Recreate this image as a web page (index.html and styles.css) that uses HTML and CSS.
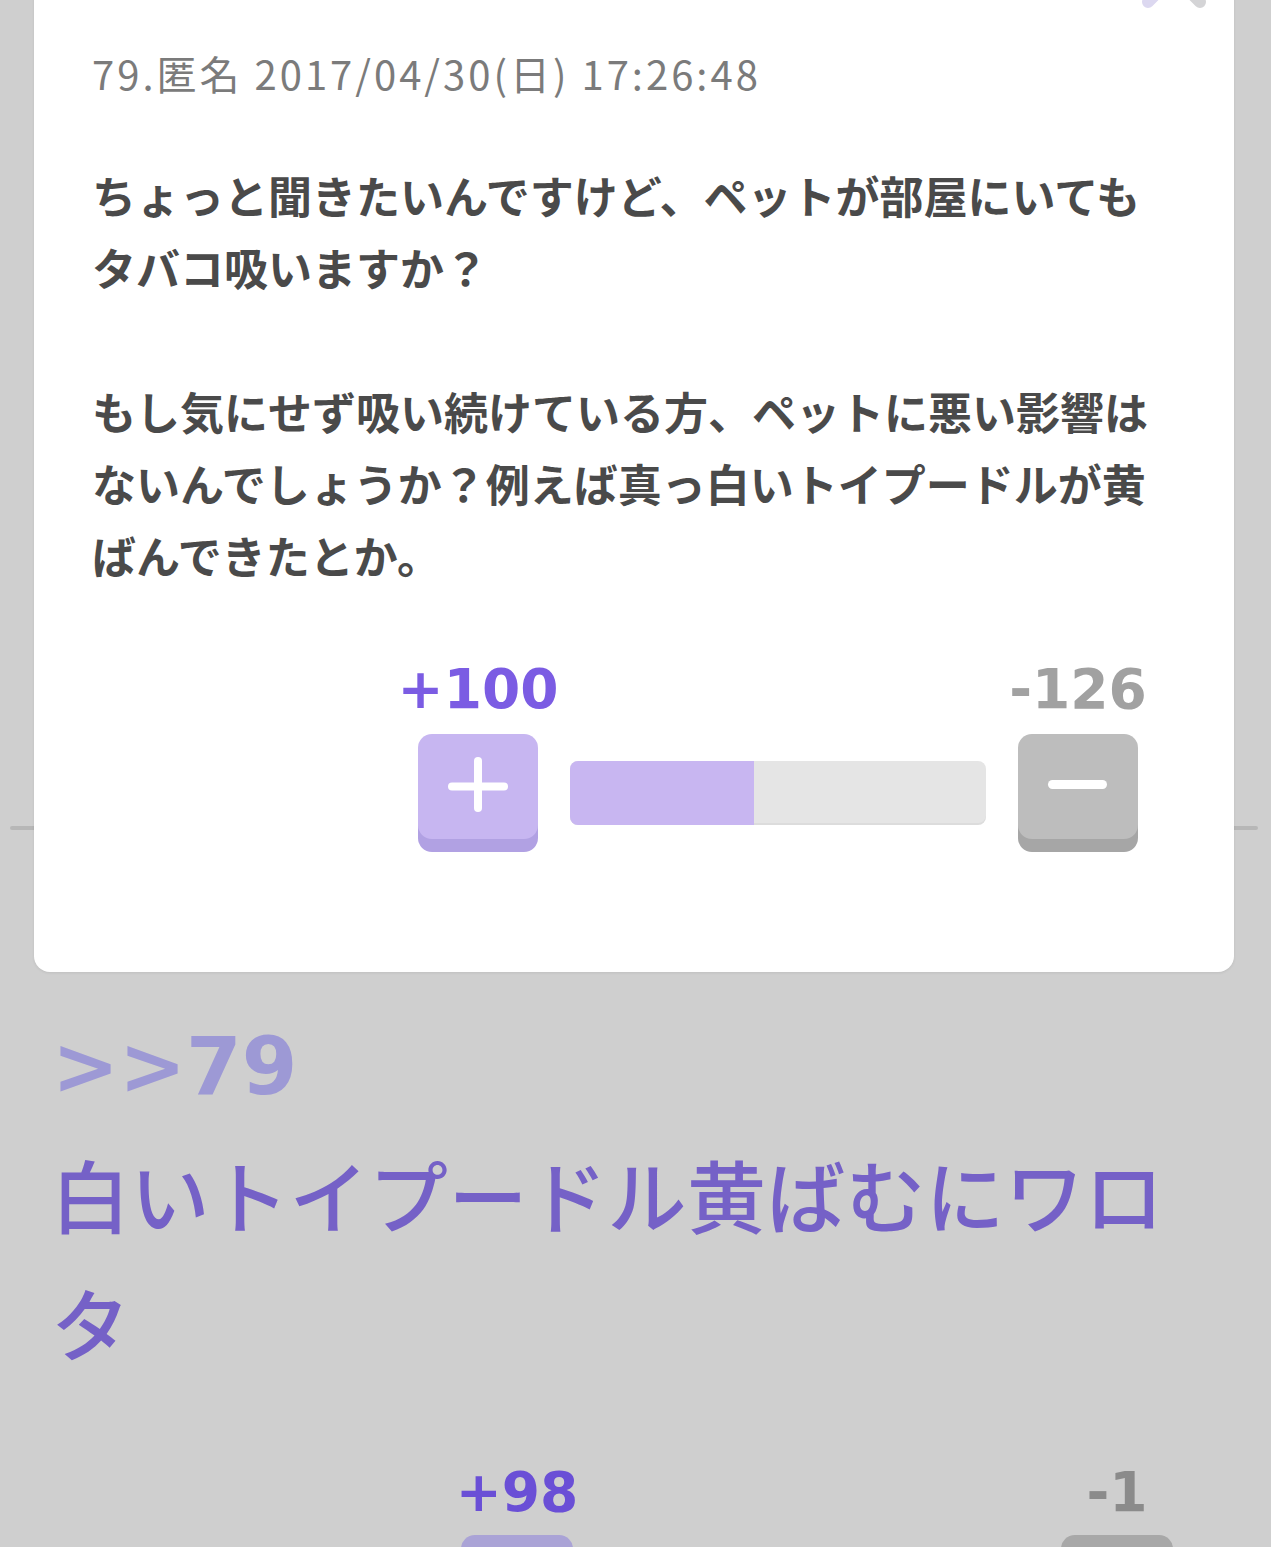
FILE: index.html
```html
<!DOCTYPE html>
<html lang="ja">
<head>
  <meta charset="UTF-8">
  <title>79.匿名 - コメント</title>
  <link rel="stylesheet" href="styles.css">
</head>
<body>
  <div class="page">
    <div class="prev-comment"></div>
    <hr class="divider">

    <div class="comment">
      <div class="anchor">&gt;&gt;79</div>
      <div class="comment-text">白いトイプードル黄ばむにワロタ</div>
      <div class="vote vote-page">
        <span class="score plus">+98</span>
        <span class="score minus">-1</span>
        <span class="vbtn vbtn-plus"></span>
        <span class="bar"></span>
        <span class="vbtn vbtn-minus"></span>
      </div>
    </div>
  </div>

  <!-- アンカー先のポップアップ -->
  <div class="modal">
    <svg class="close" width="64" height="64" viewBox="0 0 64 64">
      <line x1="6" y1="6" x2="58" y2="58" stroke="#d4d4d6" stroke-width="12" stroke-linecap="round"/>
      <line x1="58" y1="6" x2="6" y2="58" stroke="#dcd8f0" stroke-width="12" stroke-linecap="round"/>
    </svg>
    <div class="meta">79.匿名 2017/04/30(日) 17:26:48</div>
    <div class="body">
      ちょっと聞きたいんですけど、ペットが部屋にいてもタバコ吸いますか？<br><br>
      もし気にせず吸い続けている方、ペットに悪い影響はないんでしょうか？例えば真っ白いトイプードルが黄ばんできたとか。
    </div>
    <div class="vote">
      <span class="score plus">+100</span>
      <span class="score minus">-126</span>
      <span class="vbtn vbtn-plus">
        <svg width="120" height="105" viewBox="0 0 120 105">
          <line x1="34" y1="52.5" x2="86" y2="52.5" stroke="#fff" stroke-width="8" stroke-linecap="round"/>
          <line x1="60" y1="27" x2="60" y2="74" stroke="#fff" stroke-width="8" stroke-linecap="round"/>
        </svg>
      </span>
      <span class="bar"><span class="bar-fill" style="width: 44.2%"></span></span>
      <span class="vbtn vbtn-minus">
        <svg width="120" height="105" viewBox="0 0 120 105">
          <line x1="34.5" y1="50.5" x2="84.5" y2="50.5" stroke="#fff" stroke-width="9" stroke-linecap="round"/>
        </svg>
      </span>
    </div>
  </div>
</body>
</html>
```

FILE: styles.css
```css
body {
  margin: 0;
  background: #cfcfcf;
  font-family: "Noto Sans CJK JP", sans-serif;
  overflow: hidden;
}
.page {
  position: relative;
  height: 1547px;
}
.prev-comment { height: 826px; }
.divider {
  margin: 0 13px 0 10px;
  height: 4px;
  border: none;
  border-radius: 2px;
  background: #b7b7b7;
}
.comment {
  padding: 189px 55px 0 55px;
}
.anchor {
  font-family: "DejaVu Sans", sans-serif;
  font-weight: bold;
  font-size: 80px;
  line-height: 96px;
  color: #9d99d5;
  margin-left: -3px;
}
.comment-text {
  margin-top: 15px;
  margin-left: -4px;
  font-size: 79px;
  letter-spacing: 0.5px;
  line-height: 128px;
  font-weight: 500;
  color: #7561c7;
}

/* modal */
.modal {
  position: absolute;
  left: 34px;
  top: -40px;
  width: 1200px;
  box-sizing: border-box;
  padding: 83px 58px 133px 58px;
  background: #fff;
  border-radius: 16px;
  box-shadow: 0 1px 3px rgba(0,0,0,0.08);
}
.close {
  position: absolute;
  top: -16px;
  right: 28px;
}
.meta {
  font-size: 40px;
  line-height: 60px;
  letter-spacing: 3px;
  color: #7b7b7b;
}
.body {
  margin-top: 56px;
  font-size: 44px;
  line-height: 72px;
  font-weight: bold;
  color: #4a4a4a;
}

/* vote */
.vote {
  display: grid;
  grid-template-columns: 120px 1fr 120px;
  grid-template-rows: auto auto;
  column-gap: 32px;
  row-gap: 17px;
  width: 720px;
  margin: 71px 38px 0 auto;
}
.score {
  font-family: "DejaVu Sans", sans-serif;
  font-weight: bold;
  font-size: 55px;
  line-height: 55px;
  text-align: center;
  white-space: nowrap;
  display: flex;
  justify-content: center;
}
.score.plus { grid-column: 1; color: #7b5ce3; }
.score.minus { grid-column: 3; color: #a1a1a1; }
.vbtn {
  display: block;
  height: 105px;
  border-radius: 14px;
}
.vbtn svg { display: block; }
.vbtn-plus { background: #c7b6f1; box-shadow: 0 13px 0 #b1a1e3; }
.vbtn-minus { background: #bdbdbd; box-shadow: 0 13px 0 #a6a6a6; }
.bar {
  display: block;
  align-self: start;
  margin-top: 27px;
  height: 64px;
  border-radius: 8px;
  background: #e5e5e5;
  overflow: hidden;
  box-shadow: inset 0 -2px 0 rgba(0,0,0,0.04);
}
.bar-fill {
  display: block;
  height: 100%;
  background: #c8b6f1;
}

.vote-page {
  margin: 79px 39px 0 auto;
  row-gap: 15px;
}
.vote-page .score.plus { color: #6a4fd6; }
.vote-page .score.minus { color: #8b8b8b; }
.vote-page .vbtn-plus { background: #aaa3d6; box-shadow: none; }
.vote-page .vbtn-minus { background: #a8a8a8; box-shadow: none; }
.vote-page .vbtn { width: 112px; justify-self: center; }
.vote-page .bar { background: #bdbdbd; }
```
